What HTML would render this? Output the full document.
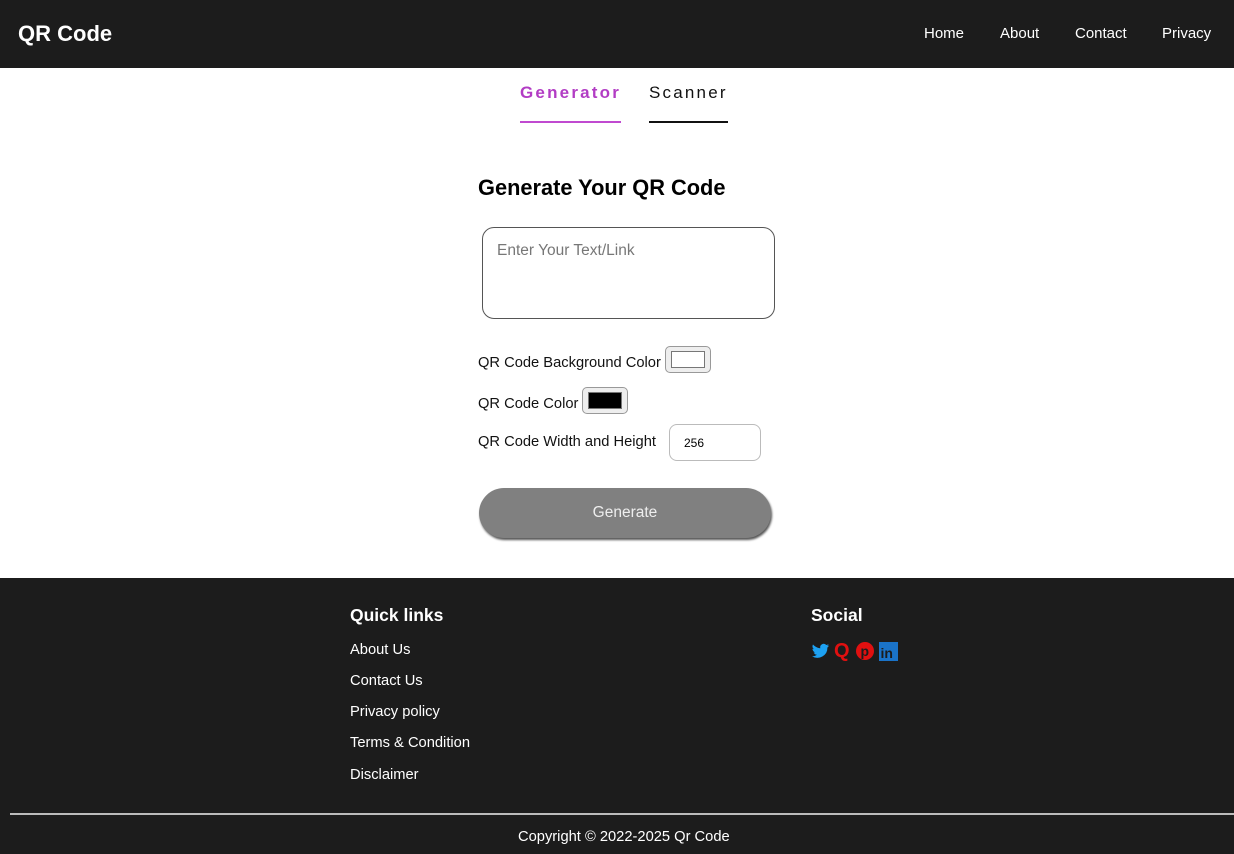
<!DOCTYPE html>
<html><head><meta charset="utf-8"><style>
*{box-sizing:border-box;margin:0;padding:0}
body{width:1234px;height:854px;overflow:hidden;font-family:"Liberation Sans",Arial,sans-serif;background:#fff;position:relative}
.abs{position:absolute}
header{position:absolute;left:0;top:0;width:1234px;height:68px;background:#1c1c1c;color:#fff}
.logo{left:18px;top:21px;font-size:22px;font-weight:bold}
.nav{top:25px;font-size:15px}
.tab{top:82px;font-size:17px;letter-spacing:2.2px}
.t{font-size:14.7px;color:#111}
footer{position:absolute;left:0;top:578px;width:1234px;height:276px;background:#1c1c1c;color:#fff}
.fl{font-size:14.7px;left:350px}
</style></head><body>
<header>
<div class="abs logo">QR Code</div>
<div class="abs nav" style="left:924px">Home</div>
<div class="abs nav" style="left:1000px">About</div>
<div class="abs nav" style="left:1075px">Contact</div>
<div class="abs nav" style="left:1162px">Privacy</div>
</header>
<div class="abs tab" style="left:520px;top:83px;color:#b23cc4;font-weight:bold">Generator</div>
<div class="abs" style="left:520px;top:121px;width:101px;height:2px;background:#c04ad0"></div>
<div class="abs tab" style="left:649px;top:83px;color:#111">Scanner</div>
<div class="abs" style="left:649px;top:121px;width:79px;height:2px;background:#111"></div>
<div class="abs" style="left:478px;top:175px;font-size:21.8px;font-weight:bold;color:#000">Generate Your QR Code</div>
<div class="abs" style="left:482px;top:227px;width:293px;height:92px;border:1px solid #555;border-radius:12px"></div>
<div class="abs" style="left:497px;top:242px;font-size:15.5px;color:#777">Enter Your Text/Link</div>
<div class="abs t" style="left:478px;top:355px">QR Code Background Color</div>
<div class="abs" style="left:665px;top:346px;width:46px;height:27px;border:1px solid #999;border-radius:5px;background:#eee;padding:4px 5px"><div style="width:100%;height:100%;background:#fff;border:1px solid #777"></div></div>
<div class="abs t" style="left:478px;top:396px">QR Code Color</div>
<div class="abs" style="left:582px;top:387px;width:46px;height:27px;border:1px solid #999;border-radius:5px;background:#eee;padding:4px 5px"><div style="width:100%;height:100%;background:#000;border:1px solid #777"></div></div>
<div class="abs t" style="left:478px;top:434px">QR Code Width and Height</div>
<div class="abs" style="left:669px;top:424px;width:92px;height:37px;border:1px solid #bbb;border-radius:8px;font-size:12px;padding:11px 14px">256</div>
<div class="abs" style="left:479px;top:488px;width:292px;height:50px;border-radius:25px;background:#808080;box-shadow:1px 2px 2px #555;color:#eee;font-size:15.5px;text-align:center;line-height:50px">Generate</div>
<footer>
<div class="abs" style="left:350px;top:27px;font-size:17.5px;font-weight:bold">Quick links</div>
<div class="abs fl" style="top:64px">About Us</div>
<div class="abs fl" style="top:95px">Contact Us</div>
<div class="abs fl" style="top:126px">Privacy policy</div>
<div class="abs fl" style="top:157px">Terms &amp; Condition</div>
<div class="abs fl" style="top:189px">Disclaimer</div>
<div class="abs" style="left:811px;top:27px;font-size:17.5px;font-weight:bold">Social</div>
<svg class="abs" style="left:811px;top:63px" width="90" height="20" viewBox="0 0 90 20">
<path d="M18 4.5c-.6.3-1.3.5-2 .6.7-.4 1.3-1.1 1.5-1.9-.7.4-1.4.7-2.2.8a3.5 3.5 0 0 0-6 3.2C6.400 7 3.800 5.600 2 3.500c-1 1.700-.5 3.800 1.100 4.700-.6 0-1.100-.2-1.600-.4 0 1.700 1.200 3.200 2.800 3.500-.5.100-1 .2-1.600.1.500 1.400 1.800 2.400 3.300 2.400A7 7 0 0 1 1 15.200 10 10 0 0 0 16.400 6.500c.7-.5 1.200-1.100 1.600-2z" fill="#1da1f2"/>
<text x="23" y="16" font-family="Liberation Sans" font-weight="bold" font-size="20" fill="#e01010">Q</text>
<circle cx="54" cy="10" r="9" fill="#e01010"/><text x="49.5" y="15" font-family="Liberation Sans" font-weight="bold" font-size="14" fill="#1c1c1c">p</text>
<rect x="68" y="1" width="19" height="19" fill="#1a73c8"/><text x="69.5" y="17" font-family="Liberation Sans" font-weight="bold" font-size="14" fill="#1c1c1c">in</text>
</svg>
<div class="abs" style="left:10px;top:235px;width:1224px;height:2px;background:#bbb"></div>
<div class="abs" style="left:518px;top:251px;font-size:14.7px">Copyright © 2022-2025 Qr Code</div>
</footer>
</body></html>
